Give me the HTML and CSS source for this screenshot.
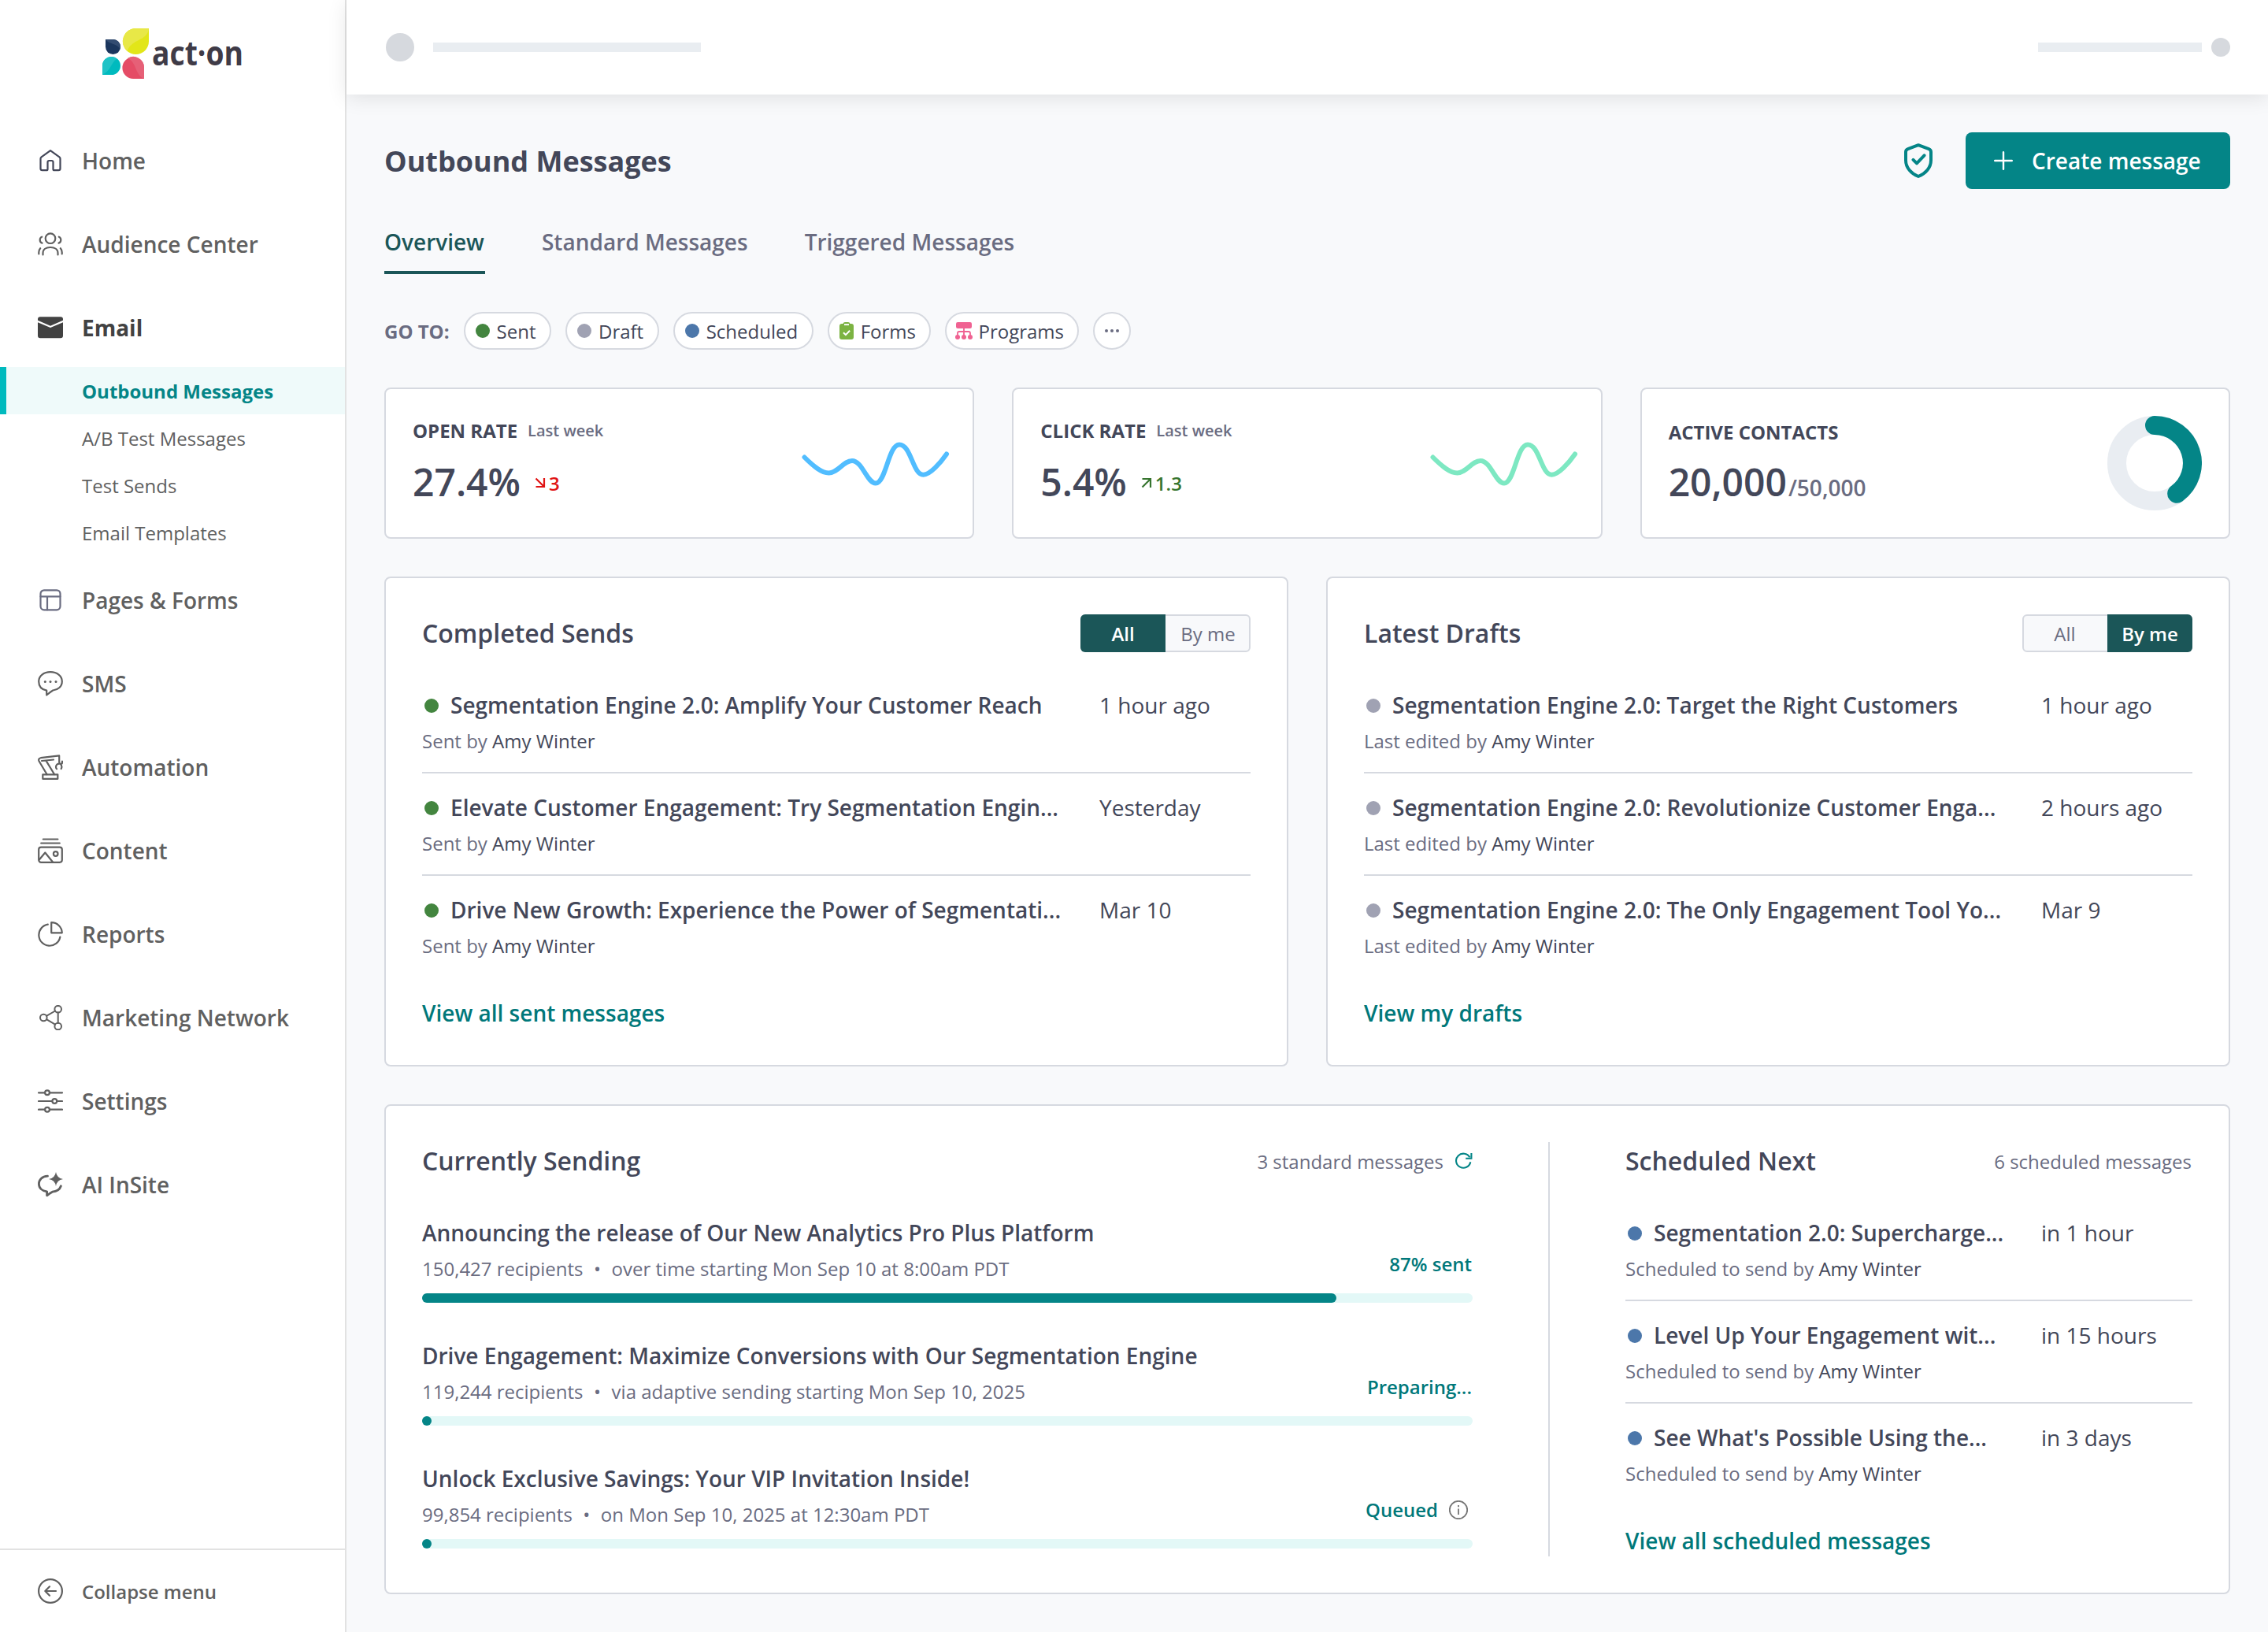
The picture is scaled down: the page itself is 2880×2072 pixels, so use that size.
FILE: index.html
```html
<!DOCTYPE html>
<html lang="en">
<head>
<meta charset="utf-8">
<title>Outbound Messages</title>
<link rel="stylesheet" href="styles.css">
</head>
<body>
<div class="app">
  <aside class="sidebar">
    <div class="logo">
      <svg width="200" height="76" viewBox="0 0 200 76">
        <path fill="#1b365d" d="M4 14h9.500a9.500 9.500 0 1 1-9.500 9.500z"/>
        <path fill="#334c71" d="M4 14h9.500a9.500 9.500 0 0 1 9 12.500C18 18 9 21 4 14z"/>
        <path fill="#e2e619" d="M59 0v16.500A16.500 16.500 0 1 1 42.500 0z"/>
        <path fill="#e8e847" d="M59 0C57 17 38 12 31.500 29A16.500 16.500 0 0 1 42.500 0z"/>
        <path fill="#00babe" d="M0 59V47.500A11.500 11.500 0 1 1 11.500 59z"/>
        <path fill="#1fc3c6" d="M0 59V47.500A11.500 11.500 0 0 1 18.500 38.500C11 43 11 54 0 59z"/>
        <path fill="#e54c66" d="M53 64H39.300A13.800 13.800 0 1 1 53 50z"/>
        <path fill="#e66077" d="M53 64V50A13.800 13.800 0 0 0 32 38C44 43 41 59 53 64z"/>
        <text class="logo-text" x="63" y="47" textLength="116" lengthAdjust="spacingAndGlyphs">act·on</text>
      </svg>
    </div>
    <nav class="nav">
      <a class="nav-item"><svg class="ico slate" viewBox="0 0 32 32"><path d="M16 3.200 4.600 11.300Q3.500 12.100 3.500 13.500V26q0 2.200 2.200 2.200H11q1.500 0 1.500-1.500V17.800q0-1.800 1.800-1.800h3.400q1.800 0 1.800 1.800v8.900q0 1.500 1.500 1.500h5.300q2.200 0 2.200-2.200V13.500q0-1.400-1.100-2.200z"/></svg><span>Home</span></a>
      <a class="nav-item"><svg class="ico" viewBox="0 0 32 32"><circle cx="16" cy="8.700" r="6.300"/><path d="M5.200 6.700C1.800 8 1.800 13.500 5.500 14.600M26.800 6.700c3.400 1.300 3.400 6.800-.300 7.900M6.500 29.500v-2C6.500 22.500 10.500 20 16 20s9.500 2.500 9.500 7.500v2M1.300 28.500v-2.300q0-3 1.900-5M30.700 28.500v-2.300q0-3-1.900-5"/></svg><span>Audience Center</span></a>
      <a class="nav-item open"><svg class="ico" viewBox="0 0 32 32"><path class="solid-dark" d="M3 2.200h26q3 0 3 3v1.600L16 13.800 0 6.800V5.200q0-3 3-3zM0 9.300 16 16l16-6.700v17q0 3-3 3H3q-3 0-3-3z"/></svg><span>Email</span></a>
      <div class="subnav">
        <a class="sub-item active">Outbound Messages</a>
        <a class="sub-item">A/B Test Messages</a>
        <a class="sub-item">Test Sends</a>
        <a class="sub-item">Email Templates</a>
      </div>
      <a class="nav-item"><svg class="ico grape" viewBox="0 0 32 32"><rect x="3.500" y="3.300" width="25" height="25" rx="4.500"/><path d="M3.500 11.300h25M12 11.300v17"/></svg><span>Pages &amp; Forms</span></a>
      <a class="nav-item"><svg class="ico" viewBox="0 0 32 32"><path d="M16 1.200C24.600 1.200 30.800 6.200 30.800 13c0 6.700-5 10.800-11.600 11.500Q16 26.500 11.200 30.500v-5.800C5 23.500 1.200 19.300 1.200 13 1.200 6.200 7.400 1.200 16 1.200z"/><g class="solid"><circle cx="9.300" cy="13.600" r="1.500"/><circle cx="16" cy="13.600" r="1.500"/><circle cx="23" cy="13.600" r="1.500"/></g></svg><span>SMS</span></a>
      <a class="nav-item"><svg class="ico" viewBox="0 0 32 32"><rect x="6.300" y="25.300" width="19" height="5.500"/><path d="M11.500 25 1.500 8.200Q.300 5 3.800 4.200L27.200 1.300V10M20 6.500 5 8M11 8.700 21 25M31 8.500v1.800q0 1.400-1.500 1.400h-2.400a4 4 0 0 0-4.100 4q0 1.500 1 2.500M29 12q2.400 3.200.7 6"/></svg><span>Automation</span></a>
      <a class="nav-item"><svg class="ico" viewBox="0 0 32 32"><path d="M6.800 1.500h18.600M4.200 6.500h23.600"/><rect x="1.200" y="11.600" width="29.600" height="19.200" rx="3"/><path d="M1.800 27.500 9.300 18.500 19 30.500"/><circle cx="22.700" cy="20" r="2.800"/></svg><span>Content</span></a>
      <a class="nav-item"><svg class="ico" viewBox="0 0 32 32"><path d="M12.800 3.700a13.600 13.600 0 1 0 15.500 16M17.200 14.300V1.200A13.500 13.500 0 0 1 30.800 14.300z"/></svg><span>Reports</span></a>
      <a class="nav-item"><svg class="ico thin" viewBox="0 0 32 32"><circle cx="7.300" cy="16" r="4.300"/><circle cx="25.700" cy="5.200" r="4.300"/><circle cx="25.700" cy="27" r="4.300"/><path d="M11 13.800 22 7.500M11 18.200l11 6.500M25.700 9.500v13.200"/></svg><span>Marketing Network</span></a>
      <a class="nav-item"><svg class="ico" viewBox="0 0 32 32"><path d="M1 5.300h8M15 5.300h16M1 16h17.300M24.300 16H31M1 26.700h8M15 26.700h16"/><circle cx="12" cy="5.300" r="2.900"/><circle cx="21.300" cy="16" r="2.900"/><circle cx="12" cy="26.700" r="2.900"/></svg><span>Settings</span></a>
      <a class="nav-item"><svg class="ico thick" viewBox="0 0 32 32"><path d="M12.500 5.200C5.500 5.500 1.400 9.800 1.400 15c0 5.200 3.800 9 10.200 9.800v5Q15 27 18.500 25.200c5.500-.500 9.500-3.200 10.900-7.400"/><path class="solid" d="M23 0q1.200 7.800 9 9-7.800 1.200-9 9-1.200-7.800-9-9 7.800-1.200 9-9z"/></svg><span>AI InSite</span></a>
    </nav>
    <a class="collapse"><svg class="ico" viewBox="0 0 32 32"><circle cx="16" cy="16" r="14.900"/><path d="M23 16H9.500M15 10.300 9.300 16l5.700 5.700"/></svg><span>Collapse menu</span></a>
  </aside>

  <div class="content">
    <header class="topbar">
      <div class="ph-group left"><span class="ph-dot big"></span><span class="ph-bar long"></span></div>
      <div class="ph-group right"><span class="ph-bar"></span><span class="ph-dot"></span></div>
    </header>

    <main class="main">
      <div class="page-head">
        <h1>Outbound Messages</h1>
        <div class="head-actions">
          <svg class="shield" width="38" height="44" viewBox="0 0 38 44"><path d="M19 2.200 32.300 7.100Q35 8.100 35 11v10.500c0 9.500-7 17-16 20.500-9-3.500-16-11-16-20.500V11Q3 8.100 5.700 7.100zM12.500 20.800l4.500 4.500 9.500-10"/></svg>
          <button class="create"><svg width="24" height="24" viewBox="0 0 24 24"><path d="M12 1.200v21.600M1.200 12h21.600"/></svg><span>Create message</span></button>
        </div>
      </div>

      <div class="tabs">
        <a class="tab active">Overview</a>
        <a class="tab">Standard Messages</a>
        <a class="tab">Triggered Messages</a>
      </div>

      <div class="goto">
        <span class="goto-label">GO TO:</span>
        <a class="chip"><i class="dot green"></i><span>Sent</span></a>
        <a class="chip"><i class="dot gray"></i><span>Draft</span></a>
        <a class="chip"><i class="dot blue"></i><span>Scheduled</span></a>
        <a class="chip"><svg width="24" height="22" viewBox="-3 0 24 22"><path fill="#7cb342" d="M3 2h1.500Q5 0 7 0h4q2 0 2.500 2H15q3 0 3 3v14q0 3-3 3H3q-3 0-3-3V5q0-3 3-3z"/><path fill="#fff" d="M6 2.200h6v1.900H6z"/><path fill="none" stroke="#fff" stroke-width="2" d="m5 13.200 2.900 2.900 5.200-5.300"/></svg><span>Forms</span></a>
        <a class="chip"><svg width="24" height="22" viewBox="-1 0 24 22"><rect x="1" width="20" height="8" rx="2.200" fill="#f06292"/><path fill="none" stroke="#f06292" stroke-width="1.800" d="M11 8v9M3 17v-3q0-2 2-2h12q2 0 2 2v3"/><g fill="#f06292"><circle cx="3" cy="19" r="3"/><circle cx="11" cy="19" r="3"/><circle cx="19" cy="19" r="3"/></g></svg><span>Programs</span></a>
        <a class="chip more"><svg width="20" height="6" viewBox="0 0 20 6"><g fill="#6a6c81"><circle cx="3" cy="3" r="2"/><circle cx="10" cy="3" r="2"/><circle cx="17" cy="3" r="2"/></g></svg></a>
      </div>

      <div class="stats">
        <section class="card stat">
          <div>
            <div class="stat-label">OPEN RATE<small>Last week</small></div>
            <div class="stat-value">27.4%<span class="delta down"><svg width="14" height="14" viewBox="0 0 14 14"><path d="m1.500 1.500 10 10M12 1v11H1.500"/></svg>3</span></div>
          </div>
          <svg class="spark" width="188" height="56" viewBox="0 0 188 56"><path stroke="#51bdff" d="M3.500 19.500C15 31 25 39.500 34.500 39.500 46 39.500 53 24 64 24 77 24 83 52.500 94 52.500 107 52.500 110 3.500 124 3.500 139 3.500 141 41.800 154.500 41.800 163 41.800 176 27 184 15.500"/></svg>
        </section>
        <section class="card stat">
          <div>
            <div class="stat-label">CLICK RATE<small>Last week</small></div>
            <div class="stat-value">5.4%<span class="delta up"><svg width="14" height="14" viewBox="0 0 14 14"><path d="m1.500 12.500 10-10M1.500 2H12v11"/></svg>1.3</span></div>
          </div>
          <svg class="spark" width="188" height="56" viewBox="0 0 188 56"><path stroke="#7de8c2" d="M3.500 19.500C15 31 25 39.500 34.500 39.500 46 39.500 53 24 64 24 77 24 83 52.500 94 52.500 107 52.500 110 3.500 124 3.500 139 3.500 141 41.800 154.500 41.800 163 41.800 176 27 184 15.500"/></svg>
        </section>
        <section class="card stat contacts">
          <div>
            <div class="stat-label">ACTIVE CONTACTS</div>
            <div class="stat-value">20,000<span class="total">/50,000</span></div>
          </div>
          <svg class="donut" width="120" height="120" viewBox="0 0 120 120"><circle cx="60" cy="60" r="48" stroke="#e9edf2"/><path stroke="#048587" stroke-linecap="round" d="M60 12a48 48 0 0 1 28.200 86.800"/></svg>
        </section>
      </div>

      <div class="pair">
        <section class="card panel">
          <div class="panel-head"><h2>Completed Sends</h2><div class="toggle"><span class="on">All</span><span>By me</span></div></div>
          <div class="list">
            <div class="row"><div class="line"><i class="dot green"></i><b>Segmentation Engine 2.0: Amplify Your Customer Reach</b><time>1 hour ago</time></div><p>Sent by <em>Amy Winter</em></p></div>
            <div class="row"><div class="line"><i class="dot green"></i><b>Elevate Customer Engagement: Try Segmentation Engin...</b><time>Yesterday</time></div><p>Sent by <em>Amy Winter</em></p></div>
            <div class="row"><div class="line"><i class="dot green"></i><b>Drive New Growth: Experience the Power of Segmentati...</b><time>Mar 10</time></div><p>Sent by <em>Amy Winter</em></p></div>
          </div>
          <a class="link">View all sent messages</a>
        </section>
        <section class="card panel">
          <div class="panel-head"><h2>Latest Drafts</h2><div class="toggle"><span>All</span><span class="on">By me</span></div></div>
          <div class="list">
            <div class="row"><div class="line"><i class="dot gray"></i><b>Segmentation Engine 2.0: Target the Right Customers</b><time>1 hour ago</time></div><p>Last edited by <em>Amy Winter</em></p></div>
            <div class="row"><div class="line"><i class="dot gray"></i><b>Segmentation Engine 2.0: Revolutionize Customer Enga...</b><time>2 hours ago</time></div><p>Last edited by <em>Amy Winter</em></p></div>
            <div class="row"><div class="line"><i class="dot gray"></i><b>Segmentation Engine 2.0: The Only Engagement Tool Yo...</b><time>Mar 9</time></div><p>Last edited by <em>Amy Winter</em></p></div>
          </div>
          <a class="link">View my drafts</a>
        </section>
      </div>

      <section class="card bottom">
        <div class="sending">
          <div class="panel-head"><h2>Currently Sending</h2><div class="count"><span>3 standard messages</span><svg class="refresh" width="22" height="22" viewBox="0 0 22 22"><path d="M19.300 12.300A9.200 9 0 1 1 18.300 6.300M20.400 1v6.800H13.200"/></svg></div></div>
          <div class="job">
            <div class="job-top"><div><b>Announcing the release of Our New Analytics Pro Plus Platform</b><p><span>150,427 recipients</span><span>•</span><span>over time starting Mon Sep 10 at 8:00am PDT</span></p></div><span class="status">87% sent</span></div>
            <div class="bar"><div class="fill" style="width:87%"></div></div>
          </div>
          <div class="job">
            <div class="job-top"><div><b>Drive Engagement: Maximize Conversions with Our Segmentation Engine</b><p><span>119,244 recipients</span><span>•</span><span>via adaptive sending starting Mon Sep 10, 2025</span></p></div><span class="status">Preparing...</span></div>
            <div class="bar"><div class="fill" style="width:0%"></div></div>
          </div>
          <div class="job">
            <div class="job-top"><div><b>Unlock Exclusive Savings: Your VIP Invitation Inside!</b><p><span>99,854 recipients</span><span>•</span><span>on Mon Sep 10, 2025 at 12:30am PDT</span></p></div><span class="status">Queued<svg class="info" width="24" height="24" viewBox="0 0 24 24"><circle cx="12" cy="12" r="11.200"/><path d="M12 10.500v7.500M12 6v2.200"/></svg></span></div>
            <div class="bar"><div class="fill" style="width:0%"></div></div>
          </div>
        </div>
        <div class="divider"></div>
        <div class="scheduled">
          <div class="panel-head"><h2>Scheduled Next</h2><div class="count"><span>6 scheduled messages</span></div></div>
          <div class="list">
            <div class="row"><div class="line"><i class="dot blue"></i><b>Segmentation 2.0: Supercharge...</b><time>in 1 hour</time></div><p>Scheduled to send by <em>Amy Winter</em></p></div>
            <div class="row"><div class="line"><i class="dot blue"></i><b>Level Up Your Engagement wit...</b><time>in 15 hours</time></div><p>Scheduled to send by <em>Amy Winter</em></p></div>
            <div class="row"><div class="line"><i class="dot blue"></i><b>See What's Possible Using the...</b><time>in 3 days</time></div><p>Scheduled to send by <em>Amy Winter</em></p></div>
          </div>
          <a class="link">View all scheduled messages</a>
        </div>
      </section>
    </main>
  </div>
</div>
</body>
</html>
```
FILE: styles.css
```css
* { box-sizing: border-box; }
body {
  margin: 0;
  font-family: "Open Sans", "Noto Sans", sans-serif;
  font-size: 24px;
  line-height: 36px;
  color: #434759;
  background: #f8f9fb;
}
h1, h2, p { margin: 0; }
svg { display: block; flex: none; }
em, i { font-style: normal; }

.app { display: flex; width: 2880px; height: 2072px; overflow: hidden; }

/* Sidebar */
.sidebar {
  flex: none;
  width: 440px;
  display: flex;
  flex-direction: column;
  background: #fff;
  border-right: 2px solid #e2e2e2;
  color: #606060;
}
.logo { height: 176px; padding: 36px 0 0 130px; }
.logo svg { overflow: visible; }
.logo-text { font-size: 43px; font-weight: 700; fill: #3f3b47; }
.nav { flex: 1; }
.nav-item {
  display: flex;
  align-items: center;
  gap: 24px;
  height: 56px;
  padding-left: 48px;
  margin-bottom: 50px;
  font-size: 28px;
  font-weight: 600;
}
.nav-item.open { margin-bottom: 22px; font-weight: 700; color: #424242; }
.subnav { margin-bottom: 28px; }
.sub-item {
  display: flex;
  align-items: center;
  height: 60px;
  padding: 2px 0 0 104px;
}
.sub-item.active {
  padding-left: 96px;
  border-left: 8px solid #00babe;
  background: #effafa;
  color: #048587;
  font-weight: 700;
}
.collapse {
  display: flex;
  align-items: center;
  gap: 24px;
  height: 106px;
  padding-left: 48px;
  border-top: 2px solid #e2e2e2;
  font-weight: 600;
}
.collapse span { padding-top: 2px; }
.ico {
  width: 32px;
  height: 32px;
  fill: none;
  stroke: #606060;
  stroke-width: 2.2;
  stroke-linecap: round;
  stroke-linejoin: round;
}
.ico.slate { stroke: #434759; }
.ico.grape { stroke: #6a6c81; }
.ico.thin { stroke-width: 2; }
.ico.thick { stroke-width: 2.8; }
.ico .solid { fill: #606060; stroke: none; }
.ico .solid-dark { fill: #424242; stroke: none; }

/* Content column */
.content { flex: 1; display: flex; flex-direction: column; }
.topbar {
  position: relative;
  flex: none;
  display: flex;
  justify-content: space-between;
  height: 120px;
  padding: 0 48px 0 50px;
  background: #fff;
  box-shadow: 0 4px 24px rgba(0, 0, 0, .1);
}
.ph-group { display: flex; align-items: center; gap: 12px; }
.ph-group.left { gap: 24px; }
.ph-dot { width: 24px; height: 24px; border-radius: 50%; background: #d6d9de; }
.ph-dot.big { width: 36px; height: 36px; }
.ph-bar { width: 208px; height: 12px; background: #e9edf1; }
.ph-bar.long { width: 340px; }

.main { flex: 1; padding: 48px 48px 48px; display: flex; flex-direction: column; }

.page-head { display: flex; justify-content: space-between; align-items: center; height: 72px; }
h1 { padding-top: 2px; font-size: 36px; font-weight: 700; }
.head-actions { display: flex; align-items: center; gap: 41px; }
.shield path { fill: none; stroke: #048587; stroke-width: 4; stroke-linecap: round; stroke-linejoin: round; }
.create {
  display: flex;
  align-items: center;
  gap: 24px;
  width: 336px;
  height: 72px;
  padding: 0 0 0 36px;
  border: 0;
  border-radius: 8px;
  background: #048587;
  color: #fff;
  font: 600 28px/36px "Open Sans", sans-serif;
}
.create span { padding-bottom: 1px; }
.create path { fill: none; stroke: #fff; stroke-width: 2.4; stroke-linecap: round; }

.tabs { display: flex; gap: 72px; height: 60px; margin-top: 48px; }
.tab { height: 60px; font-size: 28px; line-height: 39px; font-weight: 600; color: #6a6c81; }
.tab.active { padding-right: 1px; color: #1b5658; border-bottom: 4px solid #1b5658; }

.goto { display: flex; align-items: center; gap: 18px; height: 48px; margin-top: 48px; }
.goto-label { padding-top: 2px; font-weight: 700; color: #6a6c81; }
.chip {
  display: flex;
  align-items: center;
  gap: 6px;
  height: 48px;
  padding: 0 17.5px 0 10px;
  border: 2px solid #d6d9e0;
  border-radius: 24px;
  background: #fff;
}
.chip span { padding-top: 2px; }
.chip .dot { margin: 0 3px; }
.chip.more { width: 48px; padding: 0; justify-content: center; }
.dot { flex: none; width: 18px; height: 18px; border-radius: 50%; }
.green { background: #43853f; }
.gray { background: #a0a2b3; }
.blue { background: #4c77aa; }

.card { background: #fff; border: 2px solid #d6d9e0; border-radius: 8px; }

/* Stat cards */
.stats { display: grid; grid-template-columns: repeat(3, 1fr); gap: 48px; margin-top: 48px; }
.stat { display: flex; justify-content: space-between; height: 192px; padding: 34px; }
.stat-label { padding-top: 1px; font-weight: 700; line-height: 36px; }
.stat-label small { margin-left: 13px; font-size: 20px; font-weight: 600; color: #6a6c81; position: relative; top: -2px; }
.stat-value { margin-top: 15px; display: flex; align-items: baseline; font-size: 48px; line-height: 60px; font-weight: 600; }
.contacts .stat-label { padding-top: 3px; }
.contacts .stat-value { margin-top: 15px; }
.delta { display: flex; align-items: center; gap: 4px; margin-left: 18px; font-size: 24px; line-height: 36px; position: relative; top: -10px; }
.delta svg { margin-top: -2px; }
.delta path { fill: none; stroke: currentColor; stroke-width: 2.2; }
.down { color: #e01414; }
.up { color: #37752f; }
.total { margin-left: 2px; font-size: 28px; color: #6a6c81; }
.spark { margin: 33px -5px 0 0; }
.spark path { fill: none; stroke-width: 6; stroke-linecap: round; }
.donut { align-self: center; }
.donut circle, .donut path { fill: none; stroke-width: 24; }

/* Panels */
.pair { display: grid; grid-template-columns: 1fr 1fr; gap: 48px; margin-top: 48px; }
.panel { height: 622px; padding: 46px; }
.panel-head { display: flex; justify-content: space-between; align-items: center; height: 48px; }
h2 { font-size: 32px; line-height: 48px; font-weight: 600; }
.toggle { display: flex; width: 216px; height: 48px; border-radius: 6px; background: #f8f9fb; border: 2px solid #d6d9e0; color: #6a6c81; }
.toggle span { flex: 1; line-height: 46px; text-align: center; }
.toggle span:first-child:not(.on) { padding-right: 2px; }
.toggle span:last-child:not(.on) { padding-left: 2px; }
.toggle .on { flex: none; width: 108px; margin: -2px; line-height: 50px; background: #1b5658; color: #fff; font-weight: 600; border-radius: 6px 0 0 6px; }
.toggle .on:first-child { margin-right: 0; }
.toggle .on:last-child { margin-left: 0; border-radius: 0 6px 6px 0; }

.list { margin-top: 24px; }
.row { height: 130px; padding-top: 24px; border-bottom: 2px solid #d6d9e0; color: #6a6c81; }
.row:last-child { border-bottom: 0; }
.row p { margin-top: 7px; }
.row em { color: #434759; }
.line { display: flex; align-items: center; height: 40px; padding-left: 3px; font-size: 28px; color: #434759; white-space: nowrap; }
.line b { flex: 1; margin-left: 15px; padding-bottom: 2px; font-weight: 600; }
.line time { flex: none; width: 192px; padding-bottom: 2px; }
.link { display: block; margin-top: 24px; font-size: 28px; line-height: 40px; font-weight: 600; color: #00787a; }

/* Sending and scheduled */
.bottom { display: flex; height: 622px; margin-top: 48px; padding: 46px; }
.sending { width: 1334px; }
.divider { width: 2px; margin: 0 96px; background: #d6d9e0; }
.scheduled { flex: 1; }
.count { display: flex; align-items: center; gap: 15px; color: #6a6c81; }
.count span { padding-top: 2px; }
.count span:last-child { padding-right: 1px; }
.refresh path { fill: none; stroke: #048587; stroke-width: 2.1; }
.job { margin-top: 48px; }
.job-top { display: flex; justify-content: space-between; height: 96px; }
.job b { display: block; height: 40px; font-size: 28px; line-height: 38px; font-weight: 600; }
.job p { display: flex; gap: 13.5px; margin-top: 7px; color: #6a6c81; }
.status { display: flex; align-items: center; gap: 14px; height: 36px; margin: 41px 1px 0 0; font-weight: 600; color: #00787a; }
.info { margin-right: 5px; fill: none; stroke: #757575; stroke-width: 1.8; }
.bar { height: 12px; border-radius: 6px; background: #e3f8f7; }
.fill { min-width: 12px; height: 12px; border-radius: 6px; background: #048587; }
```
